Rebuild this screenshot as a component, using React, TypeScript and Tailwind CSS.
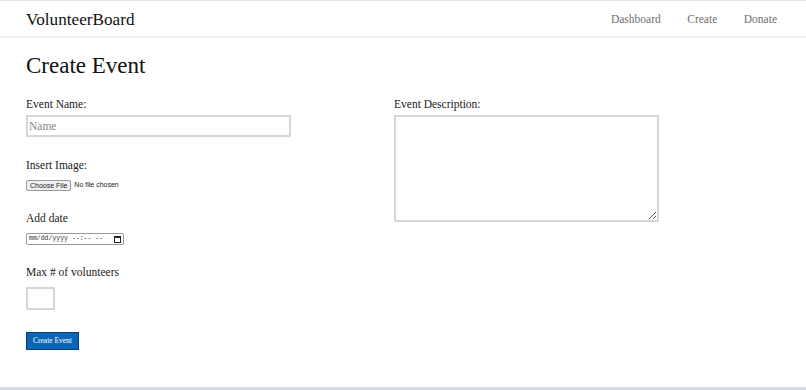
const serif = '"Liberation Serif", Georgia, serif';

export default function App() {
    return (
        <div className="w-[806px] h-[390px] bg-white flex flex-col text-[#1a1a1a] overflow-hidden" style={{ fontFamily: serif }}>
            {/* Header */}
            <header className="h-[38px] shrink-0 border-t border-[#e5e5e5] border-b-2 border-b-[#eeeeee] flex items-center justify-between pl-[26px] pr-[29px] pt-[3px]">
                <div className="text-[17.2px] text-[#111]">VolunteerBoard</div>
                <nav className="flex gap-[26.5px] text-[11.5px] text-[#6f6f6f]">
                    <a>Dashboard</a>
                    <a>Create</a>
                    <a>Donate</a>
                </nav>
            </header>

            <main className="flex-1 px-[26px] pt-[14px]">
                <h1 className="text-[23px] text-[#111] leading-[28px]">Create Event</h1>

                <div className="flex mt-[17px]">
                    {/* Left column */}
                    <div className="w-[368px] flex flex-col text-[11.5px]">
                        <label className="leading-[14px]">Event Name:</label>
                        <input
                            placeholder="Name"
                            className="mt-[4px] w-[265px] h-[22px] border-2 border-[#d6d6d6] px-[1px] text-[11.5px] placeholder:text-[#888] outline-none"
                        />

                        <label className="mt-[21px] leading-[14px]">Insert Image:</label>
                        <div className="mt-[8px] flex items-center gap-[3px] text-[7px]" style={{ fontFamily: '"Liberation Sans", Arial, sans-serif' }}>
                            <span className="border border-[#999] bg-[#efefef] rounded-[2px] px-[3px] h-[11px] leading-[9px]">Choose File</span>
                            <span>No file chosen</span>
                        </div>

                        <label className="mt-[20px] leading-[14px]">Add date</label>
                        <div
                            className="mt-[8px] w-[98px] h-[12px] border border-[#999] rounded-[2px] flex items-center justify-between px-[2px] text-[6.5px] text-[#333]"
                            style={{ fontFamily: '"Liberation Mono", monospace' }}
                        >
                            <span>mm/dd/yyyy --:-- --</span>
                            <svg width="7" height="7" viewBox="0 0 7 7">
                                <rect x="0.5" y="0.5" width="6" height="6" fill="none" stroke="#222" strokeWidth="1" />
                                <rect x="0.5" y="0.5" width="6" height="1.5" fill="#222" />
                            </svg>
                        </div>

                        <label className="mt-[20px] leading-[14px]">Max # of volunteers</label>
                        <input className="mt-[8px] w-[29px] h-[23px] border-2 border-[#d6d6d6] outline-none" />

                        <button
                            className="mt-[22px] w-[53px] h-[18px] bg-[#0b66b8] border border-[#0a3c6e] text-white text-[7.5px] leading-none"
                            style={{ fontFamily: serif }}
                        >
                            Create Event
                        </button>
                    </div>

                    {/* Right column */}
                    <div className="flex flex-col text-[11.5px]">
                        <label className="leading-[14px]">Event Description:</label>
                        <textarea className="mt-[4px] w-[265px] h-[107px] border-2 border-[#d6d6d6] outline-none resize" />
                    </div>
                </div>
            </main>

            <div className="h-[3px] shrink-0 bg-[#d3dbe6]" />
        </div>
    );
}
